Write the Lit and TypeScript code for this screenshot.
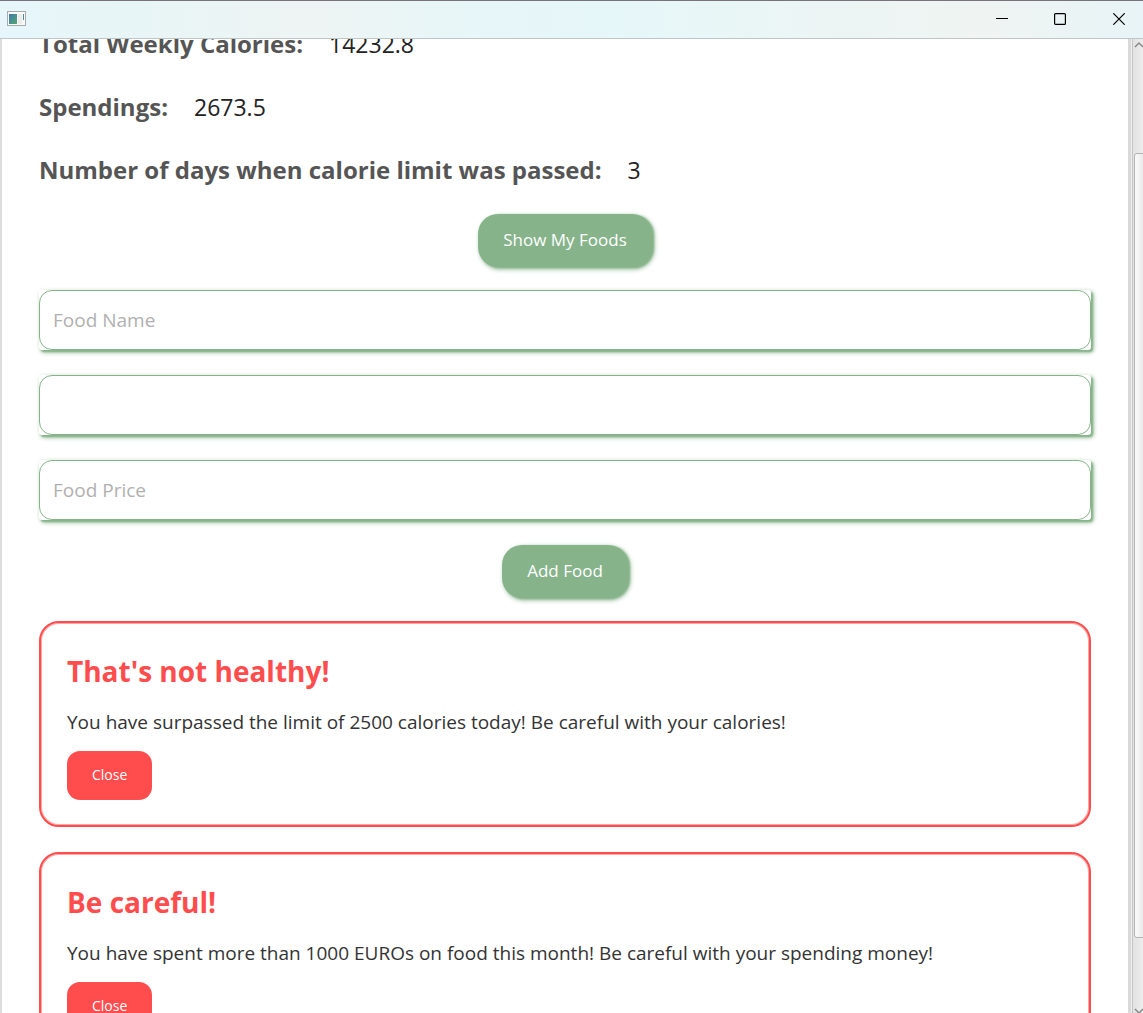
import { LitElement, html, css } from "lit";
import { customElement, property, state } from "lit/decorators.js";

@customElement("title-bar")
class TitleBar extends LitElement {
  static styles = css`
    :host {
      display: flex;
      align-items: center;
      justify-content: space-between;
      height: 39px;
      box-sizing: border-box;
      border-top: 1px solid #77737a;
      border-bottom: 1px solid #c0c6c5;
      background: linear-gradient(90deg, #e6f6fa 0%, #e8f5f6 12%, #eef4f3 27%, #e7f6f8 41%, #e6f7f9 54%, #ecf5f4 72%, #eff4f2 86%, #e8f4f7 100%);
    }
    .icon {
      margin: 0 0 1px 7px;
      display: block;
    }
    .controls {
      display: flex;
      height: 100%;
      margin-right: -6px;
    }
    .control {
      display: grid;
      place-items: center;
      width: 58px;
      padding: 0 0 2px;
      border: 0;
      background: none;
      color: #000;
    }
    .control:last-child {
      width: 60px;
    }
    .control svg {
      display: block;
    }
  `;

  render() {
    return html`
      <svg class="icon" width="20" height="16" viewBox="0 0 20 16" aria-hidden="true">
        <defs>
          <linearGradient id="pane" x1="0" y1="0" x2="1" y2="1">
            <stop offset="0" stop-color="#4479a8" />
            <stop offset="1" stop-color="#50a873" />
          </linearGradient>
        </defs>
        <rect x="0.5" y="0.5" width="18" height="14" fill="#f8f9f9" stroke="#a6abad" />
        <rect x="2" y="3" width="8" height="10" fill="url(#pane)" />
        <rect x="11" y="3" width="4" height="10" fill="#ececec" />
        <rect x="16" y="3" width="1" height="6" fill="#4f8b8c" />
      </svg>
      <div class="controls">
        <button class="control" aria-label="Minimize">
          <svg width="12" height="12" viewBox="0 0 12 12"><path d="M0 5.5H12" stroke="currentColor" /></svg>
        </button>
        <button class="control" aria-label="Maximize">
          <svg width="12" height="12" viewBox="0 0 12 12">
            <rect x="0.6" y="0.6" width="10.8" height="10.8" rx="1" fill="none" stroke="currentColor" stroke-width="1.2" />
          </svg>
        </button>
        <button class="control" aria-label="Close window">
          <svg width="12" height="12" viewBox="0 0 12 12">
            <path d="M0.3 0.3L11.7 11.7M11.7 0.3L0.3 11.7" stroke="currentColor" stroke-width="1.2" />
          </svg>
        </button>
      </div>
    `;
  }
}

@customElement("side-scroll")
class SideScroll extends LitElement {
  static styles = css`
    :host {
      display: flex;
      flex-direction: column;
      overflow: hidden;
      width: 15px;
      box-sizing: border-box;
      border-left: 3px solid #d9d9d9;
      box-shadow: inset 1px 0 #efefef, inset 2px 0 #c6c6c6;
      background: linear-gradient(90deg, #e0e0e0, #ededed);
    }
    .arrow {
      display: block;
      flex: none;
      width: 16px;
      height: 14px;
      margin-left: 3px;
    }
    .track {
      flex: 1;
      display: grid;
      grid-template-rows: 100fr 786fr 61fr;
      padding-left: 3px;
    }
    .thumb {
      grid-row: 2;
      width: 18px;
      box-sizing: border-box;
      border: 1px solid #b4b4b4;
      border-radius: 3px;
      background: linear-gradient(90deg, #fbfbfb, #e4e4e4 70%);
    }
  `;

  render() {
    return html`
      <svg class="arrow" viewBox="0 0 16 14"><path d="M1 8L5 4L9 8" fill="none" stroke="#888" stroke-width="1.5" /></svg>
      <div class="track"><div class="thumb"></div></div>
      <svg class="arrow" viewBox="0 0 16 14"><path d="M1 10L5 14L9 10" fill="none" stroke="#888" stroke-width="1.5" /></svg>
    `;
  }
}

@customElement("alert-card")
class AlertCard extends LitElement {
  @property() heading = "";
  @property() message = "";

  static styles = css`
    :host {
      display: block;
    }
    .card {
      display: flex;
      flex-direction: column;
      align-items: flex-start;
      gap: 15px;
      padding: 26px 26px 25px;
      border: 2px solid #ff4d4d;
      border-radius: 20px;
      box-shadow: inset 0 0 0 1px #ffa6a6;
      background: #fff;
    }
    .heading {
      margin: 0;
      font-size: 28px;
      line-height: 44px;
      font-weight: 700;
      color: #ff4d4d;
    }
    .message {
      margin: 0;
      font-size: 19px;
      line-height: 28px;
      color: #333;
    }
    .close {
      height: 49px;
      padding: 0 25px 2px;
      border: 0;
      border-radius: 13px;
      background: #ff4d4d;
      color: #fff;
      font: inherit;
      font-size: 14px;
    }
  `;

  private close() {
    this.dispatchEvent(new CustomEvent("dismiss"));
  }

  render() {
    return html`
      <section class="card">
        <h2 class="heading">${this.heading}</h2>
        <p class="message">${this.message}</p>
        <button class="close" @click=${this.close}>Close</button>
      </section>
    `;
  }
}

@customElement("app-root")
class AppRoot extends LitElement {
  @state() private alerts = [
    {
      heading: "That's not healthy!",
      message: "You have surpassed the limit of 2500 calories today! Be careful with your calories!",
    },
    {
      heading: "Be careful!",
      message: "You have spent more than 1000 EUROs on food this month! Be careful with your spending money!",
    },
  ];

  private stats = [
    { label: "Total Weekly Calories:", value: "14232.8" },
    { label: "Spendings:", value: "2673.5" },
    { label: "Number of days when calorie limit was passed:", value: "3" },
  ];

  private fields = [
    { name: "Food name", placeholder: "Food Name" },
    { name: "Food calories", placeholder: "" },
    { name: "Food price", placeholder: "Food Price" },
  ];

  static styles = css`
    :host {
      display: flex;
      flex-direction: column;
      height: 100vh;
      overflow: hidden;
      background: #fff;
      font-family: "Open Sans", "Noto Sans", sans-serif;
    }
    .body {
      flex: 1;
      min-height: 0;
      display: flex;
      border-left: 2px solid #dcdcdc;
      box-sizing: border-box;
    }
    .viewport {
      flex: 1;
      min-width: 0;
      overflow: hidden;
    }
    .content {
      display: flex;
      flex-direction: column;
      gap: 25px;
      margin-top: -14px;
      padding: 0 37px;
    }
    .stat {
      display: flex;
      gap: 26px;
      margin: 0;
      font-size: 24px;
      line-height: 38px;
      white-space: nowrap;
    }
    .label {
      font-weight: 675;
      color: #555;
    }
    .value {
      margin: 0;
      font-size: 23px;
      color: #222;
    }
    .action {
      align-self: center;
      height: 53px;
      margin-bottom: -2px;
      padding: 0 25px 2px;
      border: 0;
      border-radius: 20px;
      background: #86b38a;
      box-shadow: 2px 1px 2px #86b38a, 2px 2px 5px #86b38a;
      color: #fff;
      font: inherit;
      font-size: 17px;
    }
    .field {
      display: block;
      border-radius: 3px;
      background: #fff;
      box-shadow: 2px 2px 2px #86b38a, 2px 2px 5px #86b38a;
    }
    .input {
      display: block;
      width: 100%;
      height: 60px;
      box-sizing: border-box;
      padding: 0 13px;
      border: 1px solid #86b38a;
      border-radius: 13px;
      background: #fff;
      color: #333;
      font: inherit;
      font-size: 19px;
      outline: none;
    }
    .input::placeholder {
      color: #b0b0b0;
      opacity: 1;
    }
  `;

  private dismiss(index: number) {
    this.alerts = this.alerts.filter((_, i) => i !== index);
  }

  render() {
    return html`
      <title-bar></title-bar>
      <div class="body">
        <main class="viewport">
          <div class="content">
            ${this.stats.map(
              (s) => html`<dl class="stat"><dt class="label">${s.label}</dt><dd class="value">${s.value}</dd></dl>`
            )}
            <button class="action">Show My Foods</button>
            ${this.fields.map(
              (f) => html`<label class="field"><input class="input" type="text" aria-label=${f.name} placeholder=${f.placeholder} /></label>`
            )}
            <button class="action">Add Food</button>
            ${this.alerts.map(
              (a, i) => html`<alert-card .heading=${a.heading} .message=${a.message} @dismiss=${() => this.dismiss(i)}></alert-card>`
            )}
          </div>
        </main>
        <side-scroll></side-scroll>
      </div>
    `;
  }
}
